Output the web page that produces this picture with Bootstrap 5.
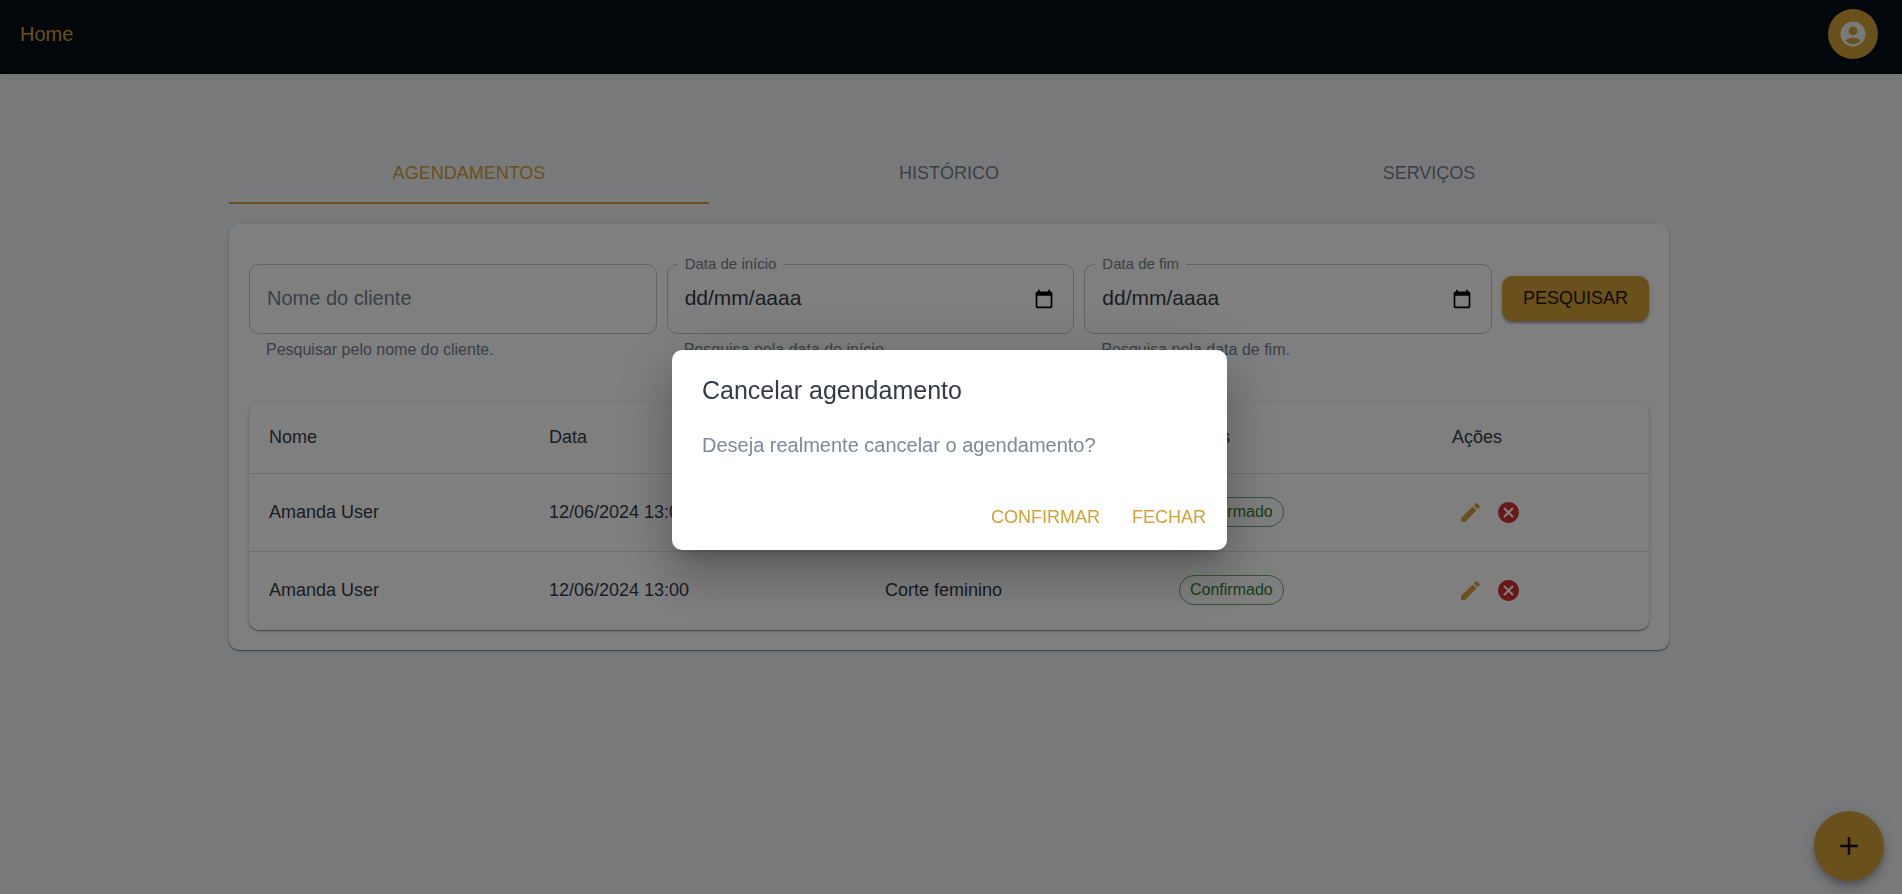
<!DOCTYPE html>
<html lang="pt-BR">
<head>
<meta charset="utf-8">
<meta name="viewport" content="width=device-width, initial-scale=1">
<title>Agendamentos</title>
<link href="https://cdn.jsdelivr.net/npm/bootstrap@5.3.0/dist/css/bootstrap.min.css" rel="stylesheet">
<style>
:root { --gold: #d4a037; --ink: #343b48; --muted-ink: #77808f; }
body { font-family: "Liberation Sans", Arial, sans-serif; font-size: 18px; line-height: 26px; color: var(--ink); background: #f3f5f9; }
.topbar { height: 74px; padding: 9px 24px 15px 20px; background: #040f19; box-shadow: 0 3px 10px rgba(190, 170, 60, .2); }
.topbar a { font-size: 20px; color: var(--gold); }
.avatar-btn { width: 50px; height: 50px; background: var(--gold); color: #f3f5f9; }
.page-wrap { max-width: 1440px; padding-top: 70px; }
.page-gutter { padding-right: 4px; padding-bottom: 40px; }
.section-tabs .nav-link { flex: 1 1 0; height: 60px; border-radius: 0; border: 0; border-bottom: 2px solid transparent; color: var(--muted-ink); background: none; }
.section-tabs .nav-link.active { color: var(--gold); background: none; border-bottom-color: var(--gold); }
.panel { background: #fff; border-radius: 10px; box-shadow: 0 1px 1px rgba(0,0,0,.4), 0 1px 4px rgba(0,0,0,.16); }
.panel-main { margin-top: 20px; padding: 40px 20px 20px; }
.search-form { gap: 10px; }
.outlined { position: relative; height: 70px; border: 1px solid #c4c4c4; border-radius: 10px; }
.outlined input { display: block; height: 68px; width: 100%; border: 0; outline: 0; background: none; padding: 0 17px 2px; font-size: 20px; color: var(--ink); }
.outlined .date-text { font-size: 21px; }
.outlined input::placeholder { color: var(--muted-ink); opacity: 1; }
.outlined label { position: absolute; left: 10px; top: -11px; padding: 0 7px; line-height: 20px; font-size: 15px; color: var(--muted-ink); background: #fff; }
.picker-btn { position: absolute; right: 19px; top: 24px; line-height: 0; color: #000; }
.hint { margin: 4px 17px 0; font-size: 16px; line-height: 24px; color: var(--muted-ink); }
.search-btn { margin-top: 12px; height: 45px; width: 147px; border-radius: 10px; background: var(--gold); color: #231a06; box-shadow: 0 4px 2px -2px rgba(0,0,0,.2), 0 2px 3px rgba(0,0,0,.14), 0 1px 6px rgba(0,0,0,.12); font-size: 18px; }
.table-panel { margin-top: 40px; padding-bottom: 1px; }
.bookings { table-layout: fixed; color: var(--ink); --bs-table-bg: transparent; }
.bookings th, .bookings td { padding: 0 20px; font-weight: 400; color: var(--ink); border-bottom: 1px solid #e0e0e0; vertical-align: middle; }
.bookings th { height: 71px; }
.bookings td { height: 78px; }
.bookings tr:last-child td { border-bottom: 0; }
.status-chip { display: inline-block; height: 30px; line-height: 28px; padding: 0 10px; border: 1px solid #6da470; border-radius: 15px; font-size: 16px; color: #2e7d32; vertical-align: middle; }
.row-actions { gap: 1px; }
.icon-only { padding: 6px; line-height: 0; border: 0; }
.add-btn { right: 18px; bottom: 13px; width: 70px; height: 70px; background: var(--gold); color: #1a1305; box-shadow: 0 4px 6px -1px rgba(0,0,0,.2), 0 8px 12px rgba(0,0,0,.14), 0 1px 22px rgba(0,0,0,.12); }
.modal { padding: 6px 3px 0 0; }
.modal-dialog { max-width: 555px; }
.modal-content { border: 0; border-radius: 10px; box-shadow: 0 14px 19px -9px rgba(0,0,0,.2), 0 30px 48px 4px rgba(0,0,0,.14), 0 11px 58px 10px rgba(0,0,0,.12); }
.modal-title { padding: 20px 30px; font-size: 25px; line-height: 40px; font-weight: 400; color: var(--ink); }
.modal-text { padding: 0 30px 25px; font-size: 20px; line-height: 30px; color: #7d899a; }
.modal-actions { padding: 9px 10px 10px; gap: 10px; }
.modal-actions .btn { height: 46px; padding: 0 11px; border: 0; font-size: 18px; color: var(--gold); }
</style>
</head>
<body>
<header class="topbar d-flex align-items-center justify-content-between">
  <a href="#" class="text-decoration-none">Home</a>
  <button type="button" class="avatar-btn btn rounded-circle border-0 p-0 d-flex align-items-center justify-content-center" aria-label="Conta">
    <svg width="30" height="30" viewBox="0 0 24 24" fill="currentColor"><path d="M12 2C6.48 2 2 6.48 2 12s4.480 10 10 10 10-4.480 10-10S17.520 2 12 2zm0 4c1.930 0 3.500 1.570 3.500 3.500S13.930 13 12 13s-3.500-1.570-3.500-3.500S10.070 6 12 6zm0 14c-2.030 0-4.430-.82-6.140-2.880C7.550 15.800 9.680 15 12 15s4.450.8 6.140 2.120C16.430 19.180 14.030 20 12 20z"/></svg>
  </button>
</header>

<div class="page-gutter">
<main class="page-wrap mx-auto">
  <nav class="section-tabs nav nav-pills" role="tablist">
    <button type="button" class="nav-link active" role="tab" aria-selected="true">AGENDAMENTOS</button>
    <button type="button" class="nav-link" role="tab" aria-selected="false">HISTÓRICO</button>
    <button type="button" class="nav-link" role="tab" aria-selected="false">SERVIÇOS</button>
  </nav>

  <section class="panel panel-main">
    <form class="search-form d-flex">
      <div class="flex-fill w-100">
        <div class="outlined"><input type="text" id="cliente" placeholder="Nome do cliente" aria-label="Nome do cliente"></div>
        <p class="hint">Pesquisar pelo nome do cliente.</p>
      </div>
      <div class="flex-fill w-100">
        <div class="outlined">
          <label for="inicio">Data de início</label>
          <input type="text" id="inicio" class="date-text" value="dd/mm/aaaa">
          <button type="button" class="picker-btn btn p-0 border-0" aria-label="Abrir calendário"><svg width="20" height="20" viewBox="0 0 24 24" fill="currentColor"><path d="M20 3h-1V1h-2v2H7V1H5v2H4c-1.100 0-2 .9-2 2v16c0 1.100.9 2 2 2h16c1.100 0 2-.9 2-2V5c0-1.100-.9-2-2-2zm0 18H4V8h16v13z"/></svg></button>
        </div>
        <p class="hint">Pesquisa pela data de início.</p>
      </div>
      <div class="flex-fill w-100">
        <div class="outlined">
          <label for="fim">Data de fim</label>
          <input type="text" id="fim" class="date-text" value="dd/mm/aaaa">
          <button type="button" class="picker-btn btn p-0 border-0" aria-label="Abrir calendário"><svg width="20" height="20" viewBox="0 0 24 24" fill="currentColor"><path d="M20 3h-1V1h-2v2H7V1H5v2H4c-1.100 0-2 .9-2 2v16c0 1.100.9 2 2 2h16c1.100 0 2-.9 2-2V5c0-1.100-.9-2-2-2zm0 18H4V8h16v13z"/></svg></button>
        </div>
        <p class="hint">Pesquisa pela data de fim.</p>
      </div>
      <button type="submit" class="search-btn btn border-0 p-0 flex-shrink-0">PESQUISAR</button>
    </form>

    <div class="panel table-panel">
      <table class="bookings table mb-0">
        <colgroup><col style="width:20%"><col style="width:24%"><col style="width:21%"><col style="width:19.5%"><col></colgroup>
        <thead>
          <tr><th scope="col">Nome</th><th scope="col">Data</th><th scope="col">Serviço</th><th scope="col">Status</th><th scope="col">Ações</th></tr>
        </thead>
        <tbody>
          <tr>
            <td>Amanda User</td><td>12/06/2024 13:00</td><td>Corte feminino</td><td><span class="status-chip">Confirmado</span></td>
            <td><div class="row-actions d-flex">
              <button type="button" class="btn icon-only" aria-label="Editar"><svg width="25" height="25" viewBox="0 0 24 24" fill="#d4a037"><path d="M3 17.250V21h3.750L17.810 9.940l-3.750-3.750L3 17.250zM20.710 7.040c.39-.39.39-1.020 0-1.410l-2.340-2.340a.9959.9959 0 0 0-1.410 0l-1.830 1.830 3.750 3.750 1.830-1.830z"/></svg></button>
              <button type="button" class="btn icon-only" aria-label="Cancelar"><svg width="25" height="25" viewBox="0 0 24 24" fill="#d32f2f"><path d="M12 2C6.470 2 2 6.470 2 12s4.470 10 10 10 10-4.470 10-10S17.530 2 12 2zm5 13.590L15.590 17 12 13.410 8.410 17 7 15.590 10.590 12 7 8.410 8.410 7 12 10.590 15.590 7 17 8.410 13.410 12 17 15.590z"/></svg></button>
            </div></td>
          </tr>
          <tr>
            <td>Amanda User</td><td>12/06/2024 13:00</td><td>Corte feminino</td><td><span class="status-chip">Confirmado</span></td>
            <td><div class="row-actions d-flex">
              <button type="button" class="btn icon-only" aria-label="Editar"><svg width="25" height="25" viewBox="0 0 24 24" fill="#d4a037"><path d="M3 17.250V21h3.750L17.810 9.940l-3.750-3.750L3 17.250zM20.710 7.040c.39-.39.39-1.020 0-1.410l-2.340-2.340a.9959.9959 0 0 0-1.410 0l-1.830 1.830 3.750 3.750 1.830-1.830z"/></svg></button>
              <button type="button" class="btn icon-only" aria-label="Cancelar"><svg width="25" height="25" viewBox="0 0 24 24" fill="#d32f2f"><path d="M12 2C6.470 2 2 6.470 2 12s4.470 10 10 10 10-4.470 10-10S17.530 2 12 2zm5 13.590L15.590 17 12 13.410 8.410 17 7 15.590 10.590 12 7 8.410 8.410 7 12 10.590 15.590 7 17 8.410 13.410 12 17 15.590z"/></svg></button>
            </div></td>
          </tr>
        </tbody>
      </table>
    </div>
  </section>
</main>
</div>

<button type="button" class="add-btn btn rounded-circle border-0 p-0 position-fixed d-flex align-items-center justify-content-center" aria-label="Novo agendamento">
  <svg width="30" height="30" viewBox="0 0 24 24" fill="currentColor"><path d="M19 13h-6v6h-2v-6H5v-2h6V5h2v6h6v2z"/></svg>
</button>

<div class="modal-backdrop show"></div>
<div class="modal show d-block" tabindex="-1" role="dialog" aria-modal="true" aria-labelledby="dlgTitle">
  <div class="modal-dialog modal-dialog-centered">
    <div class="modal-content">
      <h2 class="modal-title" id="dlgTitle">Cancelar agendamento</h2>
      <p class="modal-text mb-0">Deseja realmente cancelar o agendamento?</p>
      <div class="modal-actions d-flex justify-content-end">
        <button type="button" class="btn">CONFIRMAR</button>
        <button type="button" class="btn">FECHAR</button>
      </div>
    </div>
  </div>
</div>
<script src="https://cdn.jsdelivr.net/npm/bootstrap@5.3.0/dist/js/bootstrap.bundle.min.js"></script>
</body>
</html>
